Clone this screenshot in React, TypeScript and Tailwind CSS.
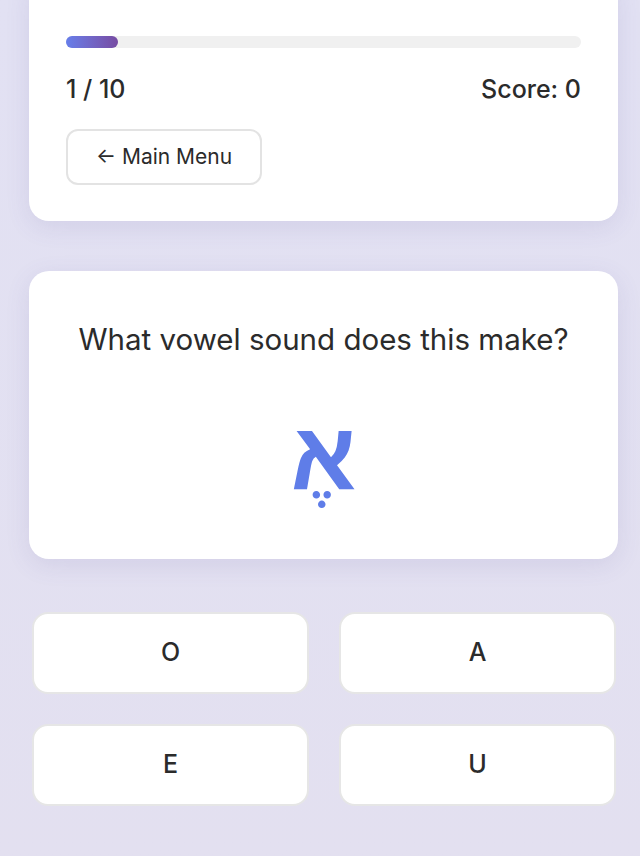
import React from "react";

export default function App() {
  const font = { fontFamily: "Inter, 'DejaVu Sans', sans-serif" };
  return (
    <div
      className="min-h-[856px] w-full overflow-hidden bg-gradient-to-b from-[#e2e1f3] to-[#e3e0f0] font-medium text-[#2b2b2b]"
      style={font}
    >
      <div className="mt-[-24px] flex flex-col pl-[29px] pr-[22px]">
        <div className="rounded-[20px] bg-white px-[37px] pt-[60px] pb-[36px] shadow-[0_6px_24px_rgba(90,80,160,0.12)]">
          <div className="h-[12px] w-full rounded-full bg-[#f0f0f0]">
            <div className="h-full w-[10%] rounded-full bg-gradient-to-r from-[#667eea] to-[#764ba2]" />
          </div>
          <div className="mt-[26px] flex items-center justify-between text-[25px] leading-[30px]">
            <span>1 / 10</span>
            <span>Score: 0</span>
          </div>
          <button className="mt-[25px] flex h-[56px] items-center rounded-[12px] border-2 border-[#e3e3e3] bg-white px-[28px] text-[21px] font-normal text-[#2b2b2b]">
            ← Main Menu
          </button>
        </div>

        <div className="mt-[50px] flex h-[288px] flex-col items-center rounded-[20px] bg-white pt-[50px] shadow-[0_6px_24px_rgba(90,80,160,0.12)]">
          <div className="text-[29.5px] font-normal leading-[36px]">What vowel sound does this make?</div>
          <div
            className="mt-[44px] text-[96px] font-bold leading-[110px] text-[#5f7de8]"
            style={{ fontFamily: "'Liberation Sans', 'DejaVu Sans', sans-serif" }}
            dir="rtl"
          >
            אֶ
          </div>
        </div>

        <div className="mt-[53px] grid grid-cols-2 gap-x-[30px] gap-y-[30px] pl-[3px] pr-[2px]">
          {["O", "A", "E", "U"].map((l) => (
            <button
              key={l}
              className="flex h-[82px] items-center justify-center rounded-[16px] border-2 border-[#e6e6e6] bg-white text-[25px] text-[#2b2b2b]"
            >
              {l}
            </button>
          ))}
        </div>
      </div>
    </div>
  );
}
